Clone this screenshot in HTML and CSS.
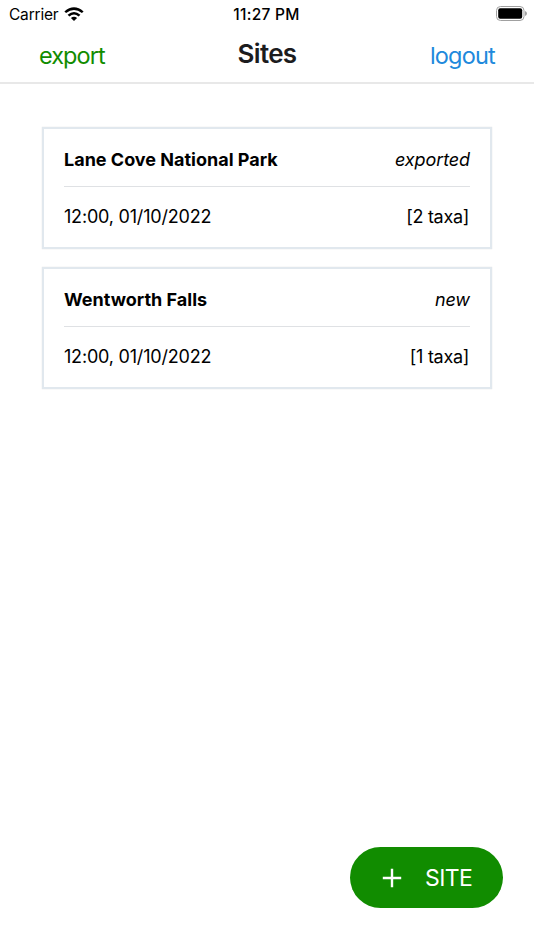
FILE: index.html
```html
<!DOCTYPE html>
<html lang="en">
<head>
    <meta charset="UTF-8">
    <meta name="viewport" content="width=device-width, initial-scale=1.0">
    <title>Sites</title>
    <link rel="stylesheet" href="styles.css">
</head>
<body>
    <div class="status-bar">
        <div class="carrier">
            <span>Carrier</span>
            <svg class="wifi" viewBox="0 0 20 14" width="20" height="14">
                <path d="M0.4 4.4 Q10 -3.8 19.6 4.4 L17.9 6.1 Q10 -0.2 2.1 6.1 Z"/>
                <path d="M3.6 7.7 Q10 2.3 16.4 7.7 L14.6 9.5 Q10 5.7 5.4 9.5 Z"/>
                <path d="M6.9 11 Q10 8.4 13.1 11 L10 14 Z"/>
            </svg>
        </div>
        <div class="time">11:27 PM</div>
        <svg class="battery" viewBox="0 0 31 15" width="31" height="15">
            <rect x="0.5" y="0.5" width="27.5" height="14" rx="4" fill="none" stroke="#a0a0a0"/>
            <rect x="2.2" y="2.2" width="24" height="10.6" rx="2"/>
            <path d="M29 5 Q31 5.7 31 7.5 Q31 9.3 29 10 Z" fill="#a0a0a0"/>
        </svg>
    </div>
    <header class="header">
        <button class="export">export</button>
        <h1>Sites</h1>
        <button class="logout">logout</button>
    </header>
    <main class="sites">
        <div class="card">
            <div class="row">
                <span class="name">Lane Cove National Park</span>
                <span class="status">exported</span>
            </div>
            <div class="row">
                <span class="date">12:00, 01/10/2022</span>
                <span class="taxa">[2 taxa]</span>
            </div>
        </div>
        <div class="card">
            <div class="row">
                <span class="name">Wentworth Falls</span>
                <span class="status">new</span>
            </div>
            <div class="row">
                <span class="date">12:00, 01/10/2022</span>
                <span class="taxa">[1 taxa]</span>
            </div>
        </div>
    </main>
    <button class="add-site">
        <svg viewBox="0 0 20 20" width="20" height="20">
            <path d="M10 0.8 V19.2 M0.8 10 H19.2"/>
        </svg>
        <span>SITE</span>
    </button>
</body>
</html>
```
FILE: styles.css
```css
* {
    box-sizing: border-box;
}
body {
    margin: 0;
    height: 950px;
    background: #fff;
    color: #000;
    font-family: Inter, sans-serif;
    font-size: 18px;
    overflow: hidden;
}
button {
    padding: 0;
    border: none;
    background: none;
    font-family: inherit;
}
.status-bar {
    display: grid;
    grid-template-columns: 1fr auto 1fr;
    align-items: center;
    height: 27px;
    padding: 0 7px 0 9px;
    font-size: 15.5px;
}
.carrier {
    display: flex;
    align-items: center;
    gap: 6px;
    letter-spacing: -0.2px;
}
.carrier span,
.time {
    padding-top: 2px;
}
.time {
    margin-left: -3px;
    font-weight: 500;
    letter-spacing: 0.3px;
}
.battery {
    justify-self: end;
}
.header {
    display: grid;
    grid-template-columns: 1fr auto 1fr;
    align-items: center;
    height: 57px;
    padding: 0 39px;
    border-bottom: 2px solid #e8e8e8;
}
.header h1 {
    margin: 0;
    padding-bottom: 3px;
    color: #1c1c1e;
    font-size: 26px;
    font-weight: 600;
    letter-spacing: -0.7px;
}
.export,
.logout {
    padding-top: 1px;
    font-size: 23.5px;
    letter-spacing: -0.8px;
}
.export {
    justify-self: start;
    color: #118c00;
    letter-spacing: -0.95px;
}
.logout {
    justify-self: end;
    color: #2089dc;
}
.sites {
    display: flex;
    flex-direction: column;
    gap: 18px;
    padding: 43px 42px 0;
}
.card {
    height: 122px;
    padding: 0 20px;
    border: 2px solid #e1e8ee;
    box-shadow: 0 0 1px rgba(0, 0, 0, 0.15);
}
.row {
    display: flex;
    justify-content: space-between;
    align-items: center;
    height: 58px;
}
.row:first-child {
    padding-top: 3px;
    border-bottom: 1px solid #dfe1e4;
}
.name {
    font-weight: 700;
}
.status {
    font-style: italic;
    letter-spacing: -0.1px;
}
.date {
    letter-spacing: -0.2px;
}
.taxa {
    margin-right: 1px;
    letter-spacing: -0.3px;
}
.add-site {
    position: fixed;
    right: 31px;
    bottom: 42px;
    display: flex;
    align-items: center;
    gap: 23px;
    width: 153px;
    height: 61px;
    padding-left: 32px;
    border-radius: 31px;
    background: #118c00;
    color: #fff;
    font-size: 23px;
    letter-spacing: -0.6px;
}
.add-site path {
    stroke: #fff;
    stroke-width: 2.4;
}
```
